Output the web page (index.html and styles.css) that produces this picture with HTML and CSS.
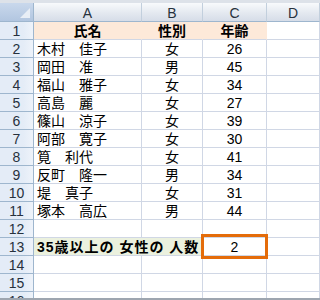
FILE: index.html
```html
<!DOCTYPE html>
<html lang="ja">
<head>
<meta charset="utf-8">
<title>Sheet</title>
<link rel="stylesheet" href="styles.css">
</head>
<body>
<div class="sheet">
  <div class="band"></div>

  <div class="corner"><span class="tri"></span></div>
  <div class="ch">A</div><div class="ch">B</div><div class="ch">C</div><div class="ch">D</div>

  <div class="rh">1</div><div class="c hd peach">氏名</div><div class="c hd peach">性別</div><div class="c hd peach">年齢</div><div class="c"></div>
  <div class="rh">2</div><div class="c name">木村　佳子</div><div class="c mid">女</div><div class="c mid">26</div><div class="c"></div>
  <div class="rh">3</div><div class="c name">岡田　准</div><div class="c mid">男</div><div class="c mid">45</div><div class="c"></div>
  <div class="rh">4</div><div class="c name">福山　雅子</div><div class="c mid">女</div><div class="c mid">34</div><div class="c"></div>
  <div class="rh">5</div><div class="c name">高島　麗</div><div class="c mid">女</div><div class="c mid">27</div><div class="c"></div>
  <div class="rh">6</div><div class="c name">篠山　涼子</div><div class="c mid">女</div><div class="c mid">39</div><div class="c"></div>
  <div class="rh">7</div><div class="c name">阿部　寛子</div><div class="c mid">女</div><div class="c mid">30</div><div class="c"></div>
  <div class="rh">8</div><div class="c name">筧　利代</div><div class="c mid">女</div><div class="c mid">41</div><div class="c"></div>
  <div class="rh">9</div><div class="c name">反町　隆一</div><div class="c mid">男</div><div class="c mid">34</div><div class="c"></div>
  <div class="rh">10</div><div class="c name">堤　真子</div><div class="c mid">女</div><div class="c mid">31</div><div class="c"></div>
  <div class="rh">11</div><div class="c name">塚本　高広</div><div class="c mid">男</div><div class="c mid">44</div><div class="c"></div>
  <div class="rh">12</div><div class="c"></div><div class="c"></div><div class="c"></div><div class="c"></div>
  <div class="rh">13</div><div class="c label green">35歳以上の 女性の 人数</div><div class="c mid result">2</div><div class="c"></div>
  <div class="rh">14</div><div class="c"></div><div class="c"></div><div class="c"></div><div class="c"></div>
  <div class="rh">15</div><div class="c"></div><div class="c"></div><div class="c"></div><div class="c"></div>
  <div class="rh cut">16</div><div class="c cutc"></div><div class="c cutc"></div><div class="c cutc"></div><div class="c cutc"></div>

  <div class="bottom"></div>
</div>
</body>
</html>
```

FILE: styles.css
```css
html, body {
  margin: 0;
  padding: 0;
  background: #ffffff;
}

body {
  width: 320px;
  height: 300px;
  overflow: hidden;
  font-family: "Liberation Sans", "Noto Sans CJK JP", sans-serif;
  color: #000000;
}

.sheet {
  display: grid;
  grid-template-columns: 34px 108px 61px 64px 1fr;
  grid-template-rows: 3px 19px repeat(15, 18px) 6px 2px;
  width: 320px;
  height: 300px;
  overflow: hidden;
}

.band {
  grid-column: 1 / -1;
  background: #dde2e9;
}

.bottom {
  grid-column: 1 / -1;
  background: #9ea6b0;
}

.corner {
  position: relative;
  background: linear-gradient(#c9d8ec, #b2c6e0);
  border-right: 1px solid #9eb6ce;
  border-bottom: 1px solid #9eb6ce;
  box-sizing: border-box;
}

.tri {
  position: absolute;
  right: 3px;
  bottom: 3px;
  width: 0;
  height: 0;
  border-left: 10px solid transparent;
  border-bottom: 10px solid #e8eef6;
}

.ch {
  display: flex;
  align-items: center;
  justify-content: center;
  box-sizing: border-box;
  background: linear-gradient(#f8fafc, #e4e9f0 55%, #d6dde8);
  border-right: 1px solid #c2cfdd;
  border-bottom: 1px solid #9eb6ce;
  font-size: 14px;
  line-height: 1;
  color: #27313d;
  padding-top: 1px;
}

.rh {
  display: flex;
  align-items: center;
  justify-content: center;
  box-sizing: border-box;
  background: linear-gradient(90deg, #e4ecf7 70%, #eef3fa);
  border-right: 1px solid #9eb6ce;
  border-bottom: 1px solid #9eb6ce;
  font-size: 14px;
  line-height: 1;
  color: #27313d;
}

.c {
  display: flex;
  align-items: center;
  box-sizing: border-box;
  border-right: 1px solid #d0d7e5;
  border-bottom: 1px solid #d0d7e5;
  font-size: 14px;
  line-height: 1;
  white-space: nowrap;
}

.name {
  padding-left: 3px;
}

.mid {
  justify-content: center;
}

.hd {
  justify-content: center;
  font-weight: bold;
}

.peach {
  background: #fde9d9;
  border-right-color: #fde9d9;
}

.label {
  grid-column: span 2;
  padding-left: 3px;
  font-weight: bold;
  letter-spacing: 1px;
}

.green {
  background: #ebf1de;
  border-right-color: #ebf1de;
}

.result {
  position: relative;
}

.result::after {
  content: "";
  position: absolute;
  left: -2px;
  top: -4px;
  width: 67px;
  height: 25px;
  box-sizing: border-box;
  border: 3px solid #e46c0a;
  z-index: 1;
}

.cut {
  align-items: flex-start;
  overflow: hidden;
  border-bottom: none;
  line-height: 18px;
}

.cutc {
  border-bottom: none;
}
```
